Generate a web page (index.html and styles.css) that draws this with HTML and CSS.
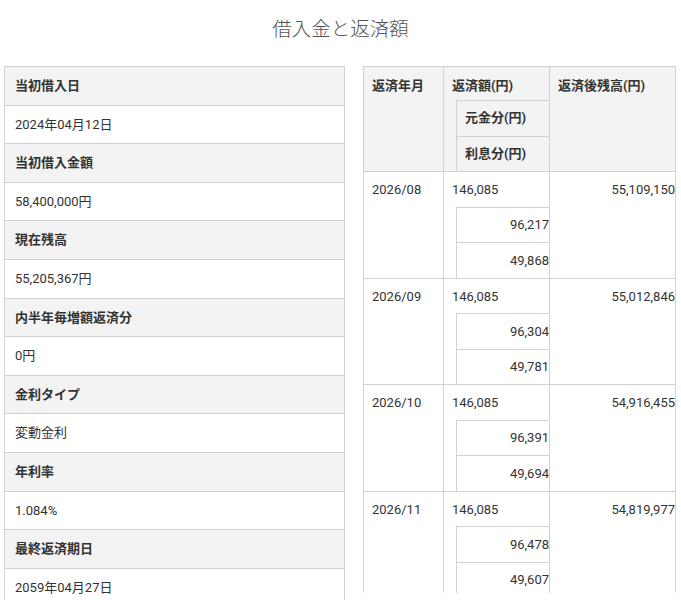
FILE: index.html
```html
<!DOCTYPE html>
<html lang="ja">
<head>
<meta charset="utf-8">
<title>借入金と返済額</title>
<link rel="stylesheet" href="styles.css">
</head>
<body>
<h1 class="title">借入金と返済額</h1>
<div class="panels">
  <table class="info">
    <tr><th>当初借入日</th></tr>
    <tr><td>2024年04月12日</td></tr>
    <tr><th>当初借入金額</th></tr>
    <tr><td>58,400,000円</td></tr>
    <tr><th>現在残高</th></tr>
    <tr><td>55,205,367円</td></tr>
    <tr><th>内半年毎増額返済分</th></tr>
    <tr><td>0円</td></tr>
    <tr><th>金利タイプ</th></tr>
    <tr><td>変動金利</td></tr>
    <tr><th>年利率</th></tr>
    <tr><td>1.084%</td></tr>
    <tr><th>最終返済期日</th></tr>
    <tr><td>2059年04月27日</td></tr>
  </table>
  <div class="sched-wrap">
    <table class="sched">
      <thead>
        <tr>
          <th class="c-date">返済年月</th>
          <th class="c-amt">返済額(円)
            <table class="sub">
              <tr><th>元金分(円)</th></tr>
              <tr><th>利息分(円)</th></tr>
            </table>
          </th>
          <th class="c-bal">返済後残高(円)</th>
        </tr>
      </thead>
      <tbody>
        <tr>
          <td class="c-date">2026/08</td>
          <td class="c-amt">146,085
            <table class="sub">
              <tr><td>96,217</td></tr>
              <tr><td>49,868</td></tr>
            </table>
          </td>
          <td class="c-bal num">55,109,150</td>
        </tr>
        <tr>
          <td class="c-date">2026/09</td>
          <td class="c-amt">146,085
            <table class="sub">
              <tr><td>96,304</td></tr>
              <tr><td>49,781</td></tr>
            </table>
          </td>
          <td class="c-bal num">55,012,846</td>
        </tr>
        <tr>
          <td class="c-date">2026/10</td>
          <td class="c-amt">146,085
            <table class="sub">
              <tr><td>96,391</td></tr>
              <tr><td>49,694</td></tr>
            </table>
          </td>
          <td class="c-bal num">54,916,455</td>
        </tr>
        <tr>
          <td class="c-date">2026/11</td>
          <td class="c-amt">146,085
            <table class="sub">
              <tr><td>96,478</td></tr>
              <tr><td>49,607</td></tr>
            </table>
          </td>
          <td class="c-bal num">54,819,977</td>
        </tr>
      </tbody>
    </table>
  </div>
</div>
</body>
</html>
```
FILE: styles.css
```css
html, body {
  margin: 0;
  padding: 0;
  background: #ffffff;
}
body {
  font-family: "Roboto", "Noto Sans CJK JP", sans-serif;
  font-size: 13px;
  color: #333333;
}
.title {
  margin: 0;
  padding-top: 16px;
  height: 28px;
  line-height: 28px;
  text-align: center;
  font-size: 19.5px;
  font-weight: 300;
  color: #555555;
}
.panels {
  display: flex;
  align-items: flex-start;
  margin-top: 22px;
  padding-left: 4px;
  gap: 18px;
}
.info {
  width: 341px;
  border-collapse: collapse;
  flex: none;
}
.info th,
.info td {
  border: 1px solid #d2d2d2;
  padding: 9px 10px;
  line-height: 19.6px;
  text-align: left;
}
.info th {
  background: #f3f3f3;
  font-weight: 700;
}
.info td {
  font-weight: 400;
}
.sched-wrap {
  width: 314px;
  height: 527px;
  overflow: hidden;
  flex: none;
}
.sched {
  width: 313px;
  border-collapse: collapse;
  table-layout: fixed;
}
.sched > thead > tr > th,
.sched > tbody > tr > td {
  border: 1px solid #d2d2d2;
  vertical-align: top;
  text-align: left;
  line-height: 19.6px;
  padding: 9px 0 0 8px;
}
.sched > thead > tr > th {
  background: #f3f3f3;
  font-weight: 700;
}
.sched > tbody > tr > td {
  padding-top: 8px;
  font-weight: 400;
}
.sched .c-date { width: 71px; }
.sched .c-amt { width: 97px; }
.sched .num { text-align: right; padding-right: 0; }
.sub {
  width: calc(100% + 8px - 12px);
  margin: 4.4px 0 0 4px;
  border-collapse: collapse;
}
.sched > tbody .sub {
  margin-top: 6.8px;
}
.sub th,
.sub td {
  border-top: 1px solid #d2d2d2;
  border-left: 1px solid #d2d2d2;
  padding: 7.5px 0 7.5px 8px;
  line-height: 19.6px;
}
.sub th {
  text-align: left;
  font-weight: 700;
}
.sub td {
  text-align: right;
  padding-right: 0;
  font-weight: 400;
}
```
